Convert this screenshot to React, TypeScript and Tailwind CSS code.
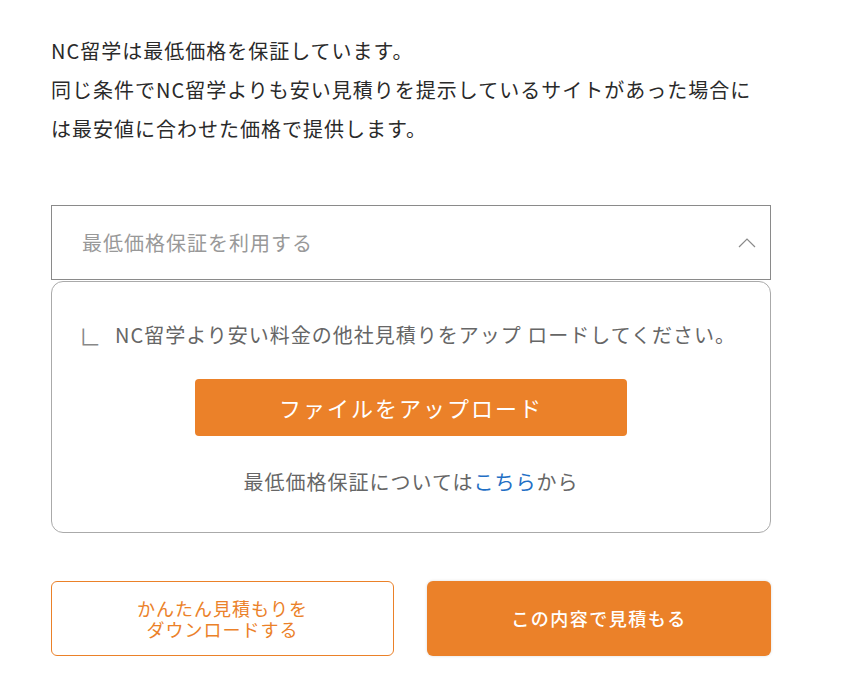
export default function App() {
  return (
    <div className="min-h-[700px] bg-white font-['Noto_Sans_CJK_JP',sans-serif]">
      <div className="ml-[51px] w-[720px] pt-[31px]">
        <p className="text-[20px] leading-[39px] tracking-[1px] text-[#2a2a2a]">
          NC留学は最低価格を保証しています。
          <br />
          同じ条件でNC留学よりも安い見積りを提示しているサイトがあった場合には最安値に合わせた価格で提供します。
        </p>

        <div className="mt-[57px] flex h-[75px] items-center justify-between border border-[#8a8a8a] pl-[30px] pr-[14px]">
          <span className="text-[20px] tracking-[1px] text-[#999]">最低価格保証を利用する</span>
          <svg width="18" height="10" viewBox="0 0 18 10" fill="none">
            <polyline points="1,9 9,1 17,9" stroke="#8a8a8a" strokeWidth="1.2" />
          </svg>
        </div>

        <div className="mt-px flex h-[252px] flex-col rounded-[12px] border border-[#aaa] pt-[38px]">
          <p className="flex items-center pl-[27px] text-[20px] leading-[30px] tracking-[1px] text-[#666]">
            <span className="mr-[13px] text-[22px] text-[#888]">∟</span>
            NC留学より安い料金の他社見積りをアップ ロードしてください。
          </p>
          <button className="mx-auto mt-[29px] h-[57px] w-[432px] rounded-[4px] bg-[#eb8129] text-[22px] tracking-[2px] text-white">
            ファイルをアップロード
          </button>
          <p className="mt-[31px] text-center text-[20px] leading-[30px] tracking-[1px] text-[#666]">
            最低価格保証については<span className="text-[#1f6fc5]">こちら</span>から
          </p>
        </div>

        <div className="mt-[48px] flex gap-[33px]">
          <button className="h-[75px] w-[343px] rounded-[6px] border border-[#eb8129] bg-white text-[18px] leading-[21px] tracking-[1px] text-[#eb8129]">
            かんたん見積もりを
            <br />
            ダウンロードする
          </button>
          <button className="h-[75px] flex-1 rounded-[6px] bg-[#eb8129] text-[18px] font-medium tracking-[1.5px] text-white shadow-[0_0_3px_rgba(0,0,0,0.15)]">
            この内容で見積もる
          </button>
        </div>
      </div>
    </div>
  )
}
